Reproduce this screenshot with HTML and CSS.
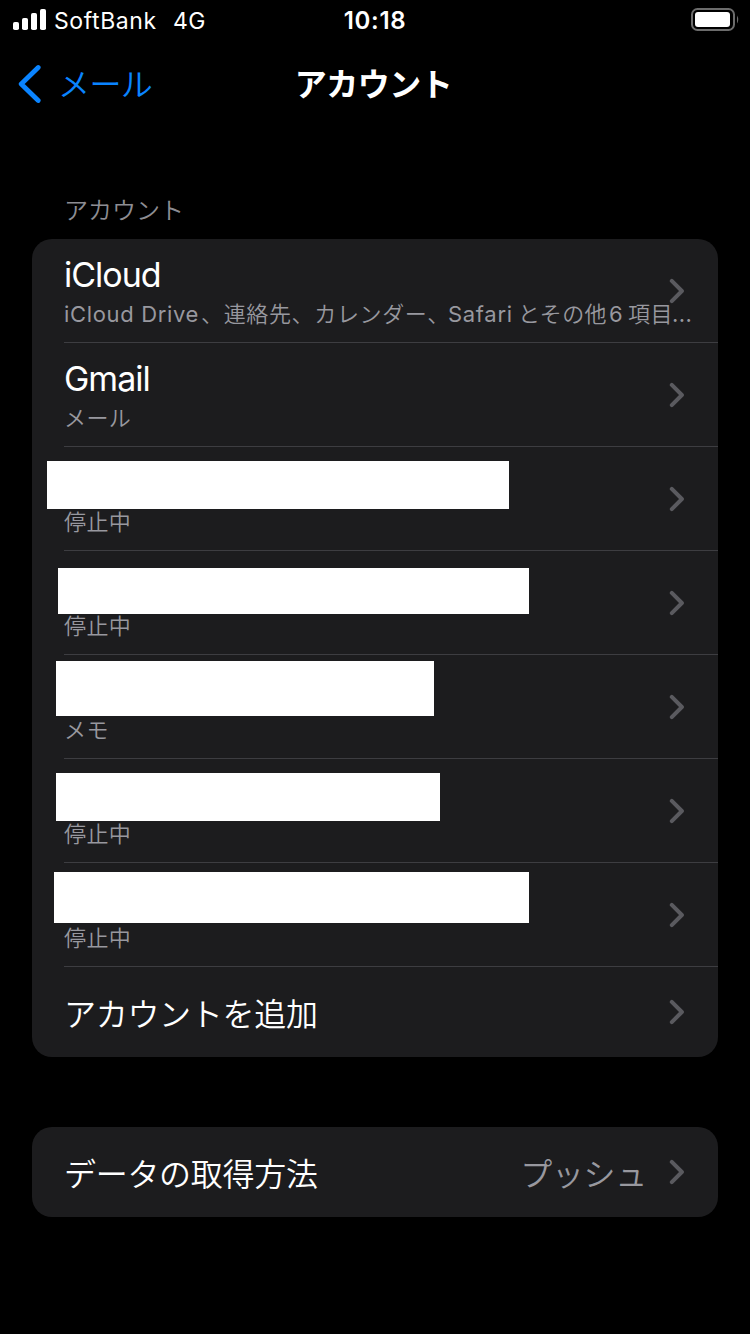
FILE: index.html
```html
<!DOCTYPE html>
<html lang="ja">
<head>
<meta charset="utf-8">
<title>アカウント</title>
<link rel="stylesheet" href="styles.css">
</head>
<body>
<svg class="defs" width="0" height="0" aria-hidden="true">
  <symbol id="chevron" viewBox="0 0 16 26"><path d="M2.8 2.9 L12.9 13 L2.8 23.1" fill="none" stroke="currentColor" stroke-width="4" stroke-linecap="round" stroke-linejoin="round"/></symbol>
</svg>
<header class="status">
  <div class="status-left">
    <svg class="signal" width="34" height="22" viewBox="0 0 34 22" fill="#fff"><rect x="0" y="13" width="6" height="8" rx="1.8"/><rect x="9" y="9" width="6" height="12" rx="1.8"/><rect x="18" y="4" width="6" height="17" rx="1.8"/><rect x="27" y="0" width="6" height="21" rx="1.8"/></svg>
    <span class="carrier">SoftBank</span>
    <span class="network">4G</span>
  </div>
  <div class="clock">10:18</div>
  <svg class="battery" width="50" height="24" viewBox="0 0 50 24"><rect x="2" y="1" width="42" height="21" rx="5.5" fill="none" stroke="#6c6c6c" stroke-width="2"/><rect x="5" y="4" width="35" height="15" rx="3" fill="#fff"/><path d="M47 7.5 Q49.4 11.5 47 15.5Z" fill="#6c6c6c"/></svg>
</header>
<nav class="nav">
  <a class="back"><svg width="24" height="40" viewBox="0 0 24 40"><path d="M20.2 3.5 L3.2 20 L20.2 36.5" fill="none" stroke="currentColor" stroke-width="4.8" stroke-linecap="round" stroke-linejoin="round"/></svg><span class="back-label">メール</span></a>
  <h1 class="title">アカウント</h1>
</nav>
<main class="content">
  <h2 class="section-label">アカウント</h2>
  <section class="card">
    <div class="row"><div class="cell"><div class="name">iCloud</div><div class="sub"><span class="latin drive">iCloud Drive</span><span class="list">、連絡先、カレンダー、</span><span class="latin safari">Safari</span><span class="others">とその他</span><span class="latin count">6</span><span class="items">項目</span><span class="latin dots">...</span></div></div><svg class="chevron"><use href="#chevron"/></svg></div>
    <div class="row"><div class="cell"><div class="name">Gmail</div><div class="sub">メール</div></div><svg class="chevron"><use href="#chevron"/></svg></div>
    <div class="row"><div class="cell"><div class="name"></div><div class="sub">停止中</div></div><svg class="chevron"><use href="#chevron"/></svg><i class="mask mask-a"></i></div>
    <div class="row"><div class="cell"><div class="name"></div><div class="sub">停止中</div></div><svg class="chevron"><use href="#chevron"/></svg><i class="mask mask-b"></i></div>
    <div class="row"><div class="cell"><div class="name"></div><div class="sub">メモ</div></div><svg class="chevron"><use href="#chevron"/></svg><i class="mask mask-c"></i></div>
    <div class="row"><div class="cell"><div class="name"></div><div class="sub">停止中</div></div><svg class="chevron"><use href="#chevron"/></svg><i class="mask mask-d"></i></div>
    <div class="row"><div class="cell"><div class="name"></div><div class="sub">停止中</div></div><svg class="chevron"><use href="#chevron"/></svg><i class="mask mask-e"></i></div>
    <div class="row single"><span class="label">アカウントを追加</span><svg class="chevron"><use href="#chevron"/></svg></div>
  </section>
  <section class="card">
    <div class="row single"><span class="label">データの取得方法</span><span class="value">プッシュ</span><svg class="chevron"><use href="#chevron"/></svg></div>
  </section>
</main>
</body>
</html>
```
FILE: styles.css
```css
* { box-sizing: border-box; }
body {
  margin: 0;
  width: 750px;
  height: 1334px;
  overflow: hidden;
  background: #000;
  color: #fff;
  font-family: Inter, "Noto Sans CJK JP", sans-serif;
}
.defs { display: block; height: 0; }
.status {
  display: grid;
  grid-template-columns: 1fr 90px 1fr;
  align-items: center;
  height: 40px;
  padding: 0 10px 0 13px;
}
.status-left { display: flex; align-items: center; height: 40px; font-size: 23px; letter-spacing: 0.6px; }
.signal { flex: none; margin-top: -1px; }
.carrier { flex: none; width: 126px; padding: 2px 0 0 7px; white-space: nowrap; }
.network { padding-top: 2px; letter-spacing: 0.3px; }
.clock { margin-left: -3px; text-align: center; font-size: 24px; font-weight: 600; letter-spacing: 0.7px; }
.battery { justify-self: end; }
.nav {
  display: grid;
  grid-template-columns: 1fr auto 1fr;
  align-items: center;
  height: 88px;
  padding: 0 18px;
}
.back { display: flex; align-items: center; gap: 16px; color: #0a84ff; font-size: 32px; font-weight: 350; line-height: 40px; letter-spacing: -0.6px; }
.back-label { padding-top: 2px; }
.title { margin: 0 3px 0 0; padding-top: 2px; font-size: 32px; font-weight: 700; letter-spacing: -0.5px; line-height: 40px; }
.content { display: flex; flex-direction: column; padding: 66px 32px 0; }
.section-label { margin: 0; padding-left: 32px; height: 45px; font-size: 24px; font-weight: 350; line-height: 34px; color: #8d8d93; }
.card { background: #1c1c1e; border-radius: 20px; margin-bottom: 70px; }
.row { position: relative; display: flex; align-items: center; height: 104px; padding-right: 33px; margin-left: 32px; border-bottom: 1px solid #3d3d41; }
.cell { flex: 1; min-width: 0; height: 103px; padding-top: 15px; }
.name { height: 43px; font-size: 34px; line-height: 42px; letter-spacing: -1px; }
.sub { display: flex; height: 36px; font-size: 22px; font-weight: 350; line-height: 35px; color: #98989f; letter-spacing: 0.4px; white-space: nowrap; }
.sub span { flex: none; }
.latin { font-weight: 400; }
.drive { width: 137px; letter-spacing: 0.65px; }
.list { width: 247px; letter-spacing: 0.65px; }
.safari { width: 70px; letter-spacing: 0.7px; }
.others { width: 91px; }
.count { width: 19px; }
.items { width: 44px; }
.chevron { flex: none; width: 16px; height: 26px; color: #5a5a5f; }
.single { height: 90px; border-bottom: 0; font-size: 32px; font-weight: 350; letter-spacing: -0.3px; }
.label { flex: 1; margin-top: -1px; }
.value { color: #98989f; margin: -1px 22px 0 0; }
.mask { position: absolute; background: #fff; }
.mask-a { left: -17px; top: 14px; width: 462px; height: 48px; }
.mask-b { left: -6px; top: 17px; width: 471px; height: 46px; }
.mask-c { left: -8px; top: 6px; width: 378px; height: 55px; }
.mask-d { left: -8px; top: 14px; width: 384px; height: 48px; }
.mask-e { left: -10px; top: 9px; width: 475px; height: 51px; }
```
